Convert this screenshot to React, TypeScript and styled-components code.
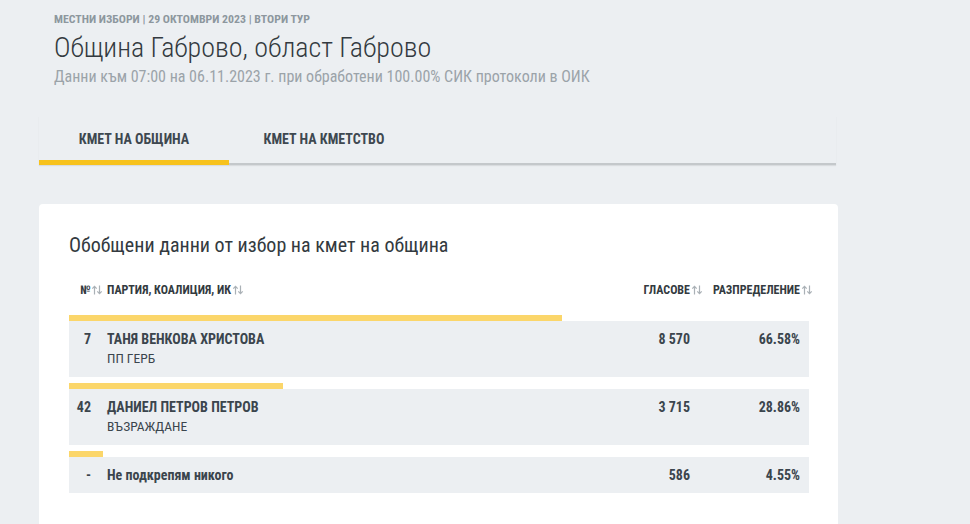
import React from "react";
import styled, { createGlobalStyle } from "styled-components";

const Global = createGlobalStyle`
  html, body { margin: 0; padding: 0; background: #eceff2; }
  body { font-family: "Roboto Condensed", "Liberation Sans Narrow", "DejaVu Sans Condensed", Roboto, sans-serif; font-stretch: condensed; color: #3b454d; }
  * { box-sizing: border-box; }
`;

const Page = styled.div`
  width: 970px;
  height: 524px;
  overflow: hidden;
  padding: 12px 0 0 39px;
`;

const Header = styled.div`
  padding-left: 15px;
`;

const Crumbs = styled.div`
  font-size: 11.8px;
  font-weight: 700;
  color: #8d979e;
  line-height: 14px;
`;

const Title = styled.h1`
  margin: 6px 0 0 0;
  font-size: 28px;
  font-weight: 300;
  color: #333a40;
  line-height: 32px;
`;

const Sub = styled.div`
  margin-top: 3px;
  font-size: 16px;
  color: #9ba3a9;
  line-height: 19px;
`;

const Tabs = styled.div`
  margin-top: 30px;
  width: 797px;
  display: flex;
  border-bottom: 2px solid #c4c8cb;
  box-shadow: 0 1px 1px rgba(0,0,0,0.08);
`;

const Tab = styled.div<{ $active?: boolean }>`
  width: 190px;
  height: 49px;
  margin-bottom: -2px;
  display: flex;
  align-items: center;
  justify-content: center;
  font-size: 14px;
  font-weight: 700;
  color: #3e4850;
  border-bottom: 5px solid ${(p) => (p.$active ? "#f7c21d" : "transparent")};
  padding-top: 2px;
`;

const Card = styled.div`
  margin-top: 39px;
  width: 799px;
  height: 400px;
  background: #fff;
  border-radius: 4px;
  padding: 28px 30px 0 30px;
`;

const CardTitle = styled.h2`
  margin: 0;
  font-size: 20px;
  font-weight: 400;
  color: #333a40;
  line-height: 26px;
`;

const Grid = styled.div`
  display: grid;
  grid-template-columns: 30px 1fr 130px 110px;
  width: 740px;
`;

const HeadRow = styled(Grid)`
  width: 744px;
  margin-top: 17px;
  margin-bottom: 10px;
  font-size: 12px;
  font-weight: 700;
  color: #333a40;
  height: 30px;
  align-items: center;
`;

const HeadCell = styled.div<{ $right?: boolean }>`
  display: flex;
  align-items: center;
  justify-content: ${(p) => (p.$right ? "flex-end" : "flex-start")};
  white-space: nowrap;
  & svg { flex-shrink: 0; }
`;

const NumHead = styled(HeadCell)`
  padding-left: 11px;
`;

const NameHead = styled(HeadCell)`
  padding-left: 8px;
`;

const SortIcon = styled.svg`
  width: 12px;
  height: 10px;
  margin-left: 1px;
`;

const Sort = () => (
  <SortIcon viewBox="0 0 12 10">
    <path d="M3.5 9.5V1.5M1.3 3.7L3.5 1.3L5.7 3.7" stroke="#aab1b6" strokeWidth="1.2" fill="none" />
    <path d="M8.5 0.5v8M6.3 6.3L8.5 8.7L10.7 6.3" stroke="#aab1b6" strokeWidth="1.2" fill="none" />
  </SortIcon>
);

const Entry = styled.div`
  margin-top: 6px;
  width: 740px;
`;

const Bar = styled.div`
  height: 6px;
  background: #fbd66a;
`;

const Row = styled(Grid)<{ $tall?: boolean }>`
  background: #eceff2;
  height: ${(p) => (p.$tall ? "56px" : "36px")};
  padding-top: ${(p) => (p.$tall ? "10px" : "0")};
  align-items: ${(p) => (p.$tall ? "start" : "center")};
  font-size: 14px;
`;

const Num = styled.div`
  text-align: right;
  font-weight: 700;
  padding-right: 8px;
  line-height: 16px;
`;

const NameCell = styled.div`
  padding-left: 8px;
`;

const Name = styled.div`
  font-weight: 700;
  line-height: 16px;
`;

const Party = styled.div`
  margin-top: 3px;
  font-size: 13.5px;
  font-weight: 400;
  line-height: 16px;
`;

const Val = styled.div<{ $pad?: number }>`
  text-align: right;
  font-weight: 700;
  line-height: 16px;
  padding-right: ${(p) => p.$pad ?? 0}px;
`;

const rows = [
  { n: "7", name: "ТАНЯ ВЕНКОВА ХРИСТОВА", party: "ПП ГЕРБ", votes: "8 570", pct: 66.58 },
  { n: "42", name: "ДАНИЕЛ ПЕТРОВ ПЕТРОВ", party: "ВЪЗРАЖДАНЕ", votes: "3 715", pct: 28.86 },
  { n: "-", name: "Не подкрепям никого", party: "", votes: "586", pct: 4.55 },
];

export default function App() {
  return (
    <Page>
      <Global />
      <Header>
        <Crumbs>МЕСТНИ ИЗБОРИ | 29 ОКТОМВРИ 2023 | ВТОРИ ТУР</Crumbs>
        <Title>Община Габрово, област Габрово</Title>
        <Sub>Данни към 07:00 на 06.11.2023 г. при обработени 100.00% СИК протоколи в ОИК</Sub>
      </Header>
      <Tabs>
        <Tab $active>КМЕТ НА ОБЩИНА</Tab>
        <Tab>КМЕТ НА КМЕТСТВО</Tab>
      </Tabs>
      <Card>
        <CardTitle>Обобщени данни от избор на кмет на община</CardTitle>
        <HeadRow>
          <NumHead>№<Sort /></NumHead>
          <NameHead>ПАРТИЯ, КОАЛИЦИЯ, ИК<Sort /></NameHead>
          <HeadCell $right>ГЛАСОВЕ<Sort /></HeadCell>
          <HeadCell $right>РАЗПРЕДЕЛЕНИЕ<Sort /></HeadCell>
        </HeadRow>
        {rows.map((r) => (
          <Entry key={r.n}>
            <Bar style={{ width: `${r.pct}%` }} />
            <Row $tall={!!r.party}>
              <Num>{r.n}</Num>
              <NameCell>
                <Name>{r.name}</Name>
                {r.party && <Party>{r.party}</Party>}
              </NameCell>
              <Val $pad={9}>{r.votes}</Val>
              <Val $pad={9}>{r.pct.toFixed(2)}%</Val>
            </Row>
          </Entry>
        ))}
      </Card>
    </Page>
  );
}
